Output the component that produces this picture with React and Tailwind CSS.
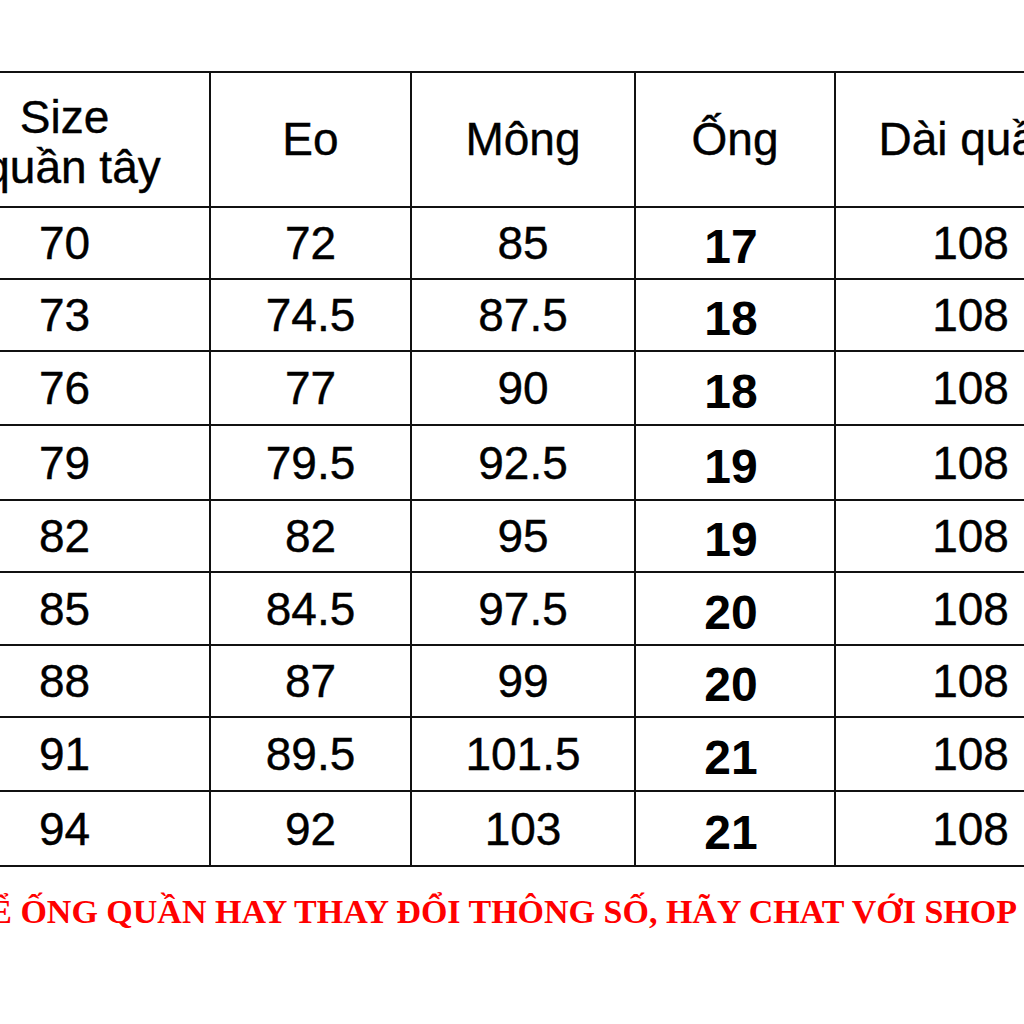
import React from "react";

const rows = [
  ["70", "72", "85", "17", "108"],
  ["73", "74.5", "87.5", "18", "108"],
  ["76", "77", "90", "18", "108"],
  ["79", "79.5", "92.5", "19", "108"],
  ["82", "82", "95", "19", "108"],
  ["85", "84.5", "97.5", "20", "108"],
  ["88", "87", "99", "20", "108"],
  ["91", "89.5", "101.5", "21", "108"],
  ["94", "92", "103", "21", "108"],
];

const arial = { fontFamily: '"Liberation Sans", Arial, sans-serif' };

export default function App() {
  return (
    <div className="w-[1024px] h-[1024px] overflow-hidden bg-white text-black" style={arial}>
      <div className="mt-[71px] ml-[-82px] w-max bg-[#111] p-[2px] grid gap-[2px] grid-cols-[289px_199px_222px_198px_269px] grid-rows-[133px_70px_70px_72px_73px_70px_71px_70px_72px_73px] text-[46px] [-webkit-text-stroke:0.4px_black]">
        <div className="bg-white flex flex-col items-center justify-center leading-[50px] pt-1">
          <span>Size</span>
          <span className="pl-4">quần tây</span>
        </div>
        <div className="bg-white flex items-center justify-center">Eo</div>
        <div className="bg-white flex items-center justify-center">Mông</div>
        <div className="bg-white flex items-center justify-center">Ống</div>
        <div className="bg-white flex items-center justify-center">Dài quần</div>
        {rows.map((r, i) => (
          <React.Fragment key={i}>
            <div className="bg-white flex items-center justify-center leading-none">{r[0]}</div>
            <div className="bg-white flex items-center justify-center leading-none">{r[1]}</div>
            <div className="bg-white flex items-center justify-center leading-none">{r[2]}</div>
            <div className="bg-white flex items-center justify-center leading-none font-bold text-[48px] pt-2 pr-2 [-webkit-text-stroke:0px_black]">{r[3]}</div>
            <div className="bg-white flex items-center justify-center leading-none">{r[4]}</div>
          </React.Fragment>
        ))}
      </div>
      <div
        className="mt-[25px] flex justify-end overflow-hidden whitespace-nowrap pr-[7px] text-[34px] leading-[40px] font-bold text-[#ff0000]"
        style={{ fontFamily: '"Liberation Serif", "Times New Roman", serif' }}
      >
        <span>NẾU MUỐN ĐỂ ỐNG QUẦN HAY THAY ĐỔI THÔNG SỐ, HÃY CHAT VỚI SHOP</span>
      </div>
    </div>
  );
}
